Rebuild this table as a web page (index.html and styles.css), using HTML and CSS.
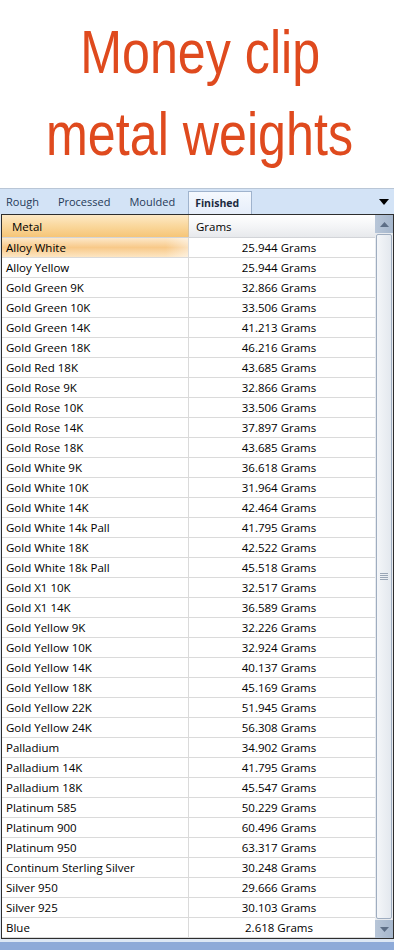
FILE: index.html
```html
<!DOCTYPE html>
<html>
<head>
<meta charset="utf-8">
<link rel="stylesheet" href="styles.css">
</head>
<body>
<div class="title">
  <div class="line"><span>Money clip</span></div>
  <div class="line"><span>metal weights</span></div>
</div>
<div class="window">
  <div class="tabs">
    <span class="tab">Rough</span>
    <span class="tab">Processed</span>
    <span class="tab">Moulded</span>
    <span class="tab active">Finished</span>
    <span class="menu-arrow"></span>
  </div>
  <div class="grid">
    <div class="table">
      <div class="row head"><div class="cell c1 sorted">Metal</div><div class="cell c2">Grams</div></div>
      <div class="row"><div class="cell c1 sel">Alloy White</div><div class="cell c2">25.944 Grams</div></div>
      <div class="row"><div class="cell c1">Alloy Yellow</div><div class="cell c2">25.944 Grams</div></div>
      <div class="row"><div class="cell c1">Gold Green 9K</div><div class="cell c2">32.866 Grams</div></div>
      <div class="row"><div class="cell c1">Gold Green 10K</div><div class="cell c2">33.506 Grams</div></div>
      <div class="row"><div class="cell c1">Gold Green 14K</div><div class="cell c2">41.213 Grams</div></div>
      <div class="row"><div class="cell c1">Gold Green 18K</div><div class="cell c2">46.216 Grams</div></div>
      <div class="row"><div class="cell c1">Gold Red 18K</div><div class="cell c2">43.685 Grams</div></div>
      <div class="row"><div class="cell c1">Gold Rose 9K</div><div class="cell c2">32.866 Grams</div></div>
      <div class="row"><div class="cell c1">Gold Rose 10K</div><div class="cell c2">33.506 Grams</div></div>
      <div class="row"><div class="cell c1">Gold Rose 14K</div><div class="cell c2">37.897 Grams</div></div>
      <div class="row"><div class="cell c1">Gold Rose 18K</div><div class="cell c2">43.685 Grams</div></div>
      <div class="row"><div class="cell c1">Gold White 9K</div><div class="cell c2">36.618 Grams</div></div>
      <div class="row"><div class="cell c1">Gold White 10K</div><div class="cell c2">31.964 Grams</div></div>
      <div class="row"><div class="cell c1">Gold White 14K</div><div class="cell c2">42.464 Grams</div></div>
      <div class="row"><div class="cell c1">Gold White 14k Pall</div><div class="cell c2">41.795 Grams</div></div>
      <div class="row"><div class="cell c1">Gold White 18K</div><div class="cell c2">42.522 Grams</div></div>
      <div class="row"><div class="cell c1">Gold White 18k Pall</div><div class="cell c2">45.518 Grams</div></div>
      <div class="row"><div class="cell c1">Gold X1 10K</div><div class="cell c2">32.517 Grams</div></div>
      <div class="row"><div class="cell c1">Gold X1 14K</div><div class="cell c2">36.589 Grams</div></div>
      <div class="row"><div class="cell c1">Gold Yellow 9K</div><div class="cell c2">32.226 Grams</div></div>
      <div class="row"><div class="cell c1">Gold Yellow 10K</div><div class="cell c2">32.924 Grams</div></div>
      <div class="row"><div class="cell c1">Gold Yellow 14K</div><div class="cell c2">40.137 Grams</div></div>
      <div class="row"><div class="cell c1">Gold Yellow 18K</div><div class="cell c2">45.169 Grams</div></div>
      <div class="row"><div class="cell c1">Gold Yellow 22K</div><div class="cell c2">51.945 Grams</div></div>
      <div class="row"><div class="cell c1">Gold Yellow 24K</div><div class="cell c2">56.308 Grams</div></div>
      <div class="row"><div class="cell c1">Palladium</div><div class="cell c2">34.902 Grams</div></div>
      <div class="row"><div class="cell c1">Palladium 14K</div><div class="cell c2">41.795 Grams</div></div>
      <div class="row"><div class="cell c1">Palladium 18K</div><div class="cell c2">45.547 Grams</div></div>
      <div class="row"><div class="cell c1">Platinum 585</div><div class="cell c2">50.229 Grams</div></div>
      <div class="row"><div class="cell c1">Platinum 900</div><div class="cell c2">60.496 Grams</div></div>
      <div class="row"><div class="cell c1">Platinum 950</div><div class="cell c2">63.317 Grams</div></div>
      <div class="row"><div class="cell c1">Continum Sterling Silver</div><div class="cell c2">30.248 Grams</div></div>
      <div class="row"><div class="cell c1">Silver 950</div><div class="cell c2">29.666 Grams</div></div>
      <div class="row"><div class="cell c1">Silver 925</div><div class="cell c2">30.103 Grams</div></div>
      <div class="row"><div class="cell c1">Blue</div><div class="cell c2">2.618 Grams</div></div>
    </div>
    <div class="scrollbar">
      <div class="sb-btn"><svg width="9" height="5" viewBox="0 0 9 5"><path d="M0 5 L4.5 0 L9 5 Z" fill="#5d6e86"/></svg></div>
      <div class="sb-track"><div class="thumb"><span class="grip"></span></div></div>
      <div class="sb-btn"><svg width="9" height="5" viewBox="0 0 9 5"><path d="M0 0 L9 0 L4.5 5 Z" fill="#5d6e86"/></svg></div>
    </div>
  </div>
  <div class="band"></div>
</div>
</body>
</html>
```
FILE: styles.css
```css
html, body {
  margin: 0;
  padding: 0;
  background: #ffffff;
}

.title {
  box-sizing: border-box;
  height: 188px;
  padding-top: 11px;
  font-family: "Liberation Sans", Arial, sans-serif;
  font-size: 62px;
  line-height: 82px;
  color: #df4a1e;
  text-align: center;
}

.title .line {
  height: 82px;
}

.title .line span {
  display: inline-block;
  transform: scaleX(0.81);
  transform-origin: center;
  white-space: nowrap;
}

.window {
  width: 394px;
  border-top: 1px solid #b9c6d6;
  background: #dde7f4;
  font-family: "Open Sans", "Noto Sans", sans-serif;
  font-size: 11.5px;
}

.tabs {
  display: flex;
  align-items: stretch;
  height: 25px;
  padding-left: 6px;
  background: #d3e3f6;
  position: relative;
}

.tab {
  display: flex;
  align-items: center;
  margin-right: 19px;
  font-size: 11px;
  color: #263a58;
}

.tab.active {
  margin-left: -6px;
  margin-top: 2px;
  padding: 0 12px 0 6px;
  background: linear-gradient(#f5f9fe, #e6eefa);
  border: 1px solid #9fb3cd;
  border-bottom: none;
  font-weight: 700;
  font-size: 10.5px;
  color: #1b2a40;
}

.menu-arrow {
  position: absolute;
  right: 5px;
  top: 10px;
  width: 0;
  height: 0;
  border-left: 5px solid transparent;
  border-right: 5px solid transparent;
  border-top: 6px solid #000;
}

.grid {
  display: flex;
  width: 393px;
  box-sizing: border-box;
  margin-left: 1px;
  border: 1px solid #2e2e2e;
  background: #fff;
}

.table {
  width: 373px;
}

.row {
  display: flex;
  height: 20px;
  box-sizing: border-box;
  border-bottom: 1px solid #dadada;
  color: #000;
}

.cell {
  display: flex;
  align-items: center;
  box-sizing: border-box;
  white-space: nowrap;
}

.c1 {
  width: 187px;
  padding-left: 4px;
  border-right: 1px solid #dadada;
}

.c2 {
  width: 186px;
  justify-content: center;
  padding-right: 6px;
}

.row.head {
  height: 23px;
  border-bottom: 1px solid #d2d4d8;
}

.row.head .c1 {
  padding-left: 10px;
  border-right: 1px solid #d7c3a0;
}

.row.head .c2 {
  justify-content: flex-start;
  padding-left: 7px;
  padding-right: 0;
  background: linear-gradient(#ffffff, #f3f4f6 55%, #e7e9ec);
}

.sorted {
  background: linear-gradient(#fde9c6, #fad9a0 45%, #f6c577);
}

.sel {
  background: linear-gradient(90deg, rgba(255,255,255,0) 0%, rgba(255,255,255,0) 88%, rgba(255,255,255,0.45) 100%),
              linear-gradient(#fde8c9, #f8c989 50%, #fde6c3);
}

.scrollbar {
  width: 18px;
  display: flex;
  flex-direction: column;
  background: #e8ebef;
}

.sb-btn {
  height: 18px;
  display: flex;
  align-items: center;
  justify-content: center;
  background: linear-gradient(90deg, #b8c6d8, #a5b6cc);
}

.sb-track {
  flex: 1;
  display: flex;
  padding: 1px 1px;
}

.thumb {
  flex: 1;
  display: flex;
  align-items: center;
  justify-content: center;
  border: 1px solid #9fadc0;
  border-radius: 2px;
  background: linear-gradient(90deg, #f4f6f9, #e3e8ee);
}

.grip {
  display: block;
  width: 8px;
  height: 7px;
  background: repeating-linear-gradient(#9aa6b6 0 1px, transparent 1px 2px);
}

.band {
  margin-top: 3px;
  height: 10px;
  background: #8eaad8;
}
```
